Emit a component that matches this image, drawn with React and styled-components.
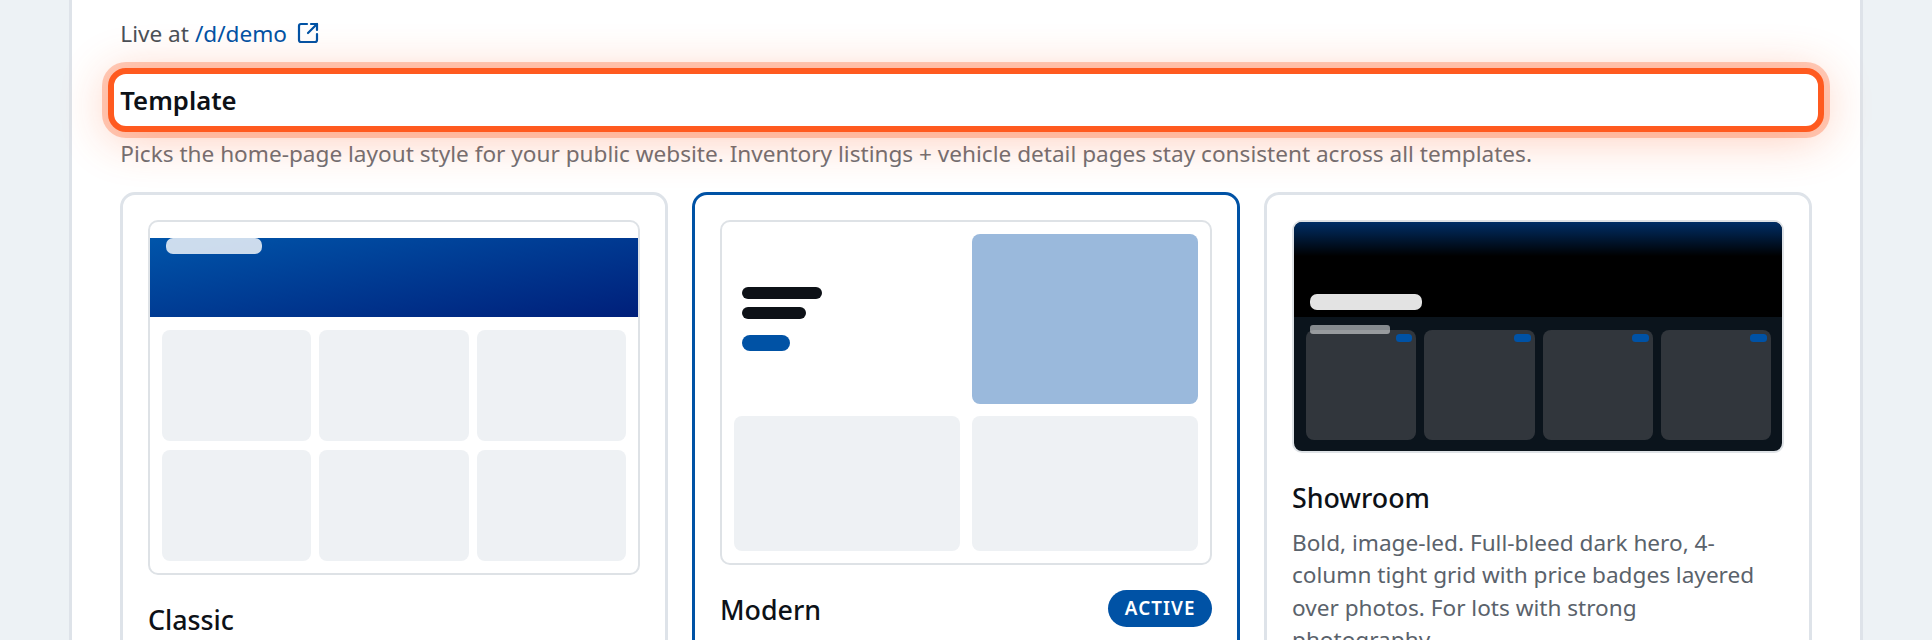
import React from 'react';
import styled, { createGlobalStyle } from 'styled-components';
import { SquareArrowOutUpRight } from 'lucide-react';

const Global = createGlobalStyle`
  html, body { margin: 0; padding: 0; height: 640px; overflow: hidden; background: #edf2f5; }
  #root { height: 640px; overflow: hidden; }
  * { box-sizing: border-box; }
`;

const Page = styled.div`
  padding: 0 69px;
  font-family: "Noto Sans", "Open Sans", sans-serif;
  color: #0d1117;
`;

const Panel = styled.main`
  background: #fff;
  border-left: 3px solid #dee3e9;
  border-right: 3px solid #dee3e9;
  padding: 18px 48.3px 0;
`;

const LiveRow = styled.div`
  display: flex;
  align-items: center;
  height: 30px;
  font-size: 22.6px;
  color: #495057;
  gap: 6px;
`;

const LiveLink = styled.a`
  display: inline-flex;
  align-items: center;
  gap: 9px;
  color: #0052a5;
  text-decoration: none;
`;

const Spotlight = styled.div`
  position: relative;
  z-index: 1;
  height: 64px;
  margin: 20px -12.3px 0;
  padding: 0 6.3px;
  display: flex;
  align-items: center;
  border: 6px solid #ff5a1f;
  border-radius: 18px;
  background: #fff;
  font-size: 25.7px;
  font-weight: 600;
  box-shadow: 0 0 0 6px rgba(255, 90, 31, 0.3), 0 6px 48px rgba(255, 90, 31, 0.32);
`;

const Lede = styled.p`
  margin: 6px 0 22px;
  font-size: 22.6px;
  line-height: 32px;
  color: #6c6f75;
  white-space: nowrap;
`;

const CardGrid = styled.div`
  display: grid;
  grid-template-columns: repeat(3, 1fr);
  gap: 24.6px;
  align-items: stretch;
`;

const Card = styled.article`
  border: 3.5px solid ${(p) => (p.$active ? '#0052a5' : '#dee3e9')};
  border-radius: 15px;
  padding: 24.7px;
  background: #fff;
`;

const Preview = styled.div`
  border: 2px solid #dee2e6;
  border-radius: 10px;
  overflow: hidden;
  background: ${(p) => p.$bg || '#fff'};
  height: ${(p) => p.$h}px;
`;

const ClassicHero = styled.div`
  margin-top: 16px;
  height: 79.7px;
  padding-left: 15.8px;
  background: linear-gradient(170deg, #0055aa 0%, #001f7a 100%);
`;

const ClassicPill = styled.div`
  width: 96px;
  height: 16px;
  border-radius: 7px;
  background: rgba(255, 255, 255, 0.8);
`;

const ClassicTiles = styled.div`
  display: grid;
  grid-template-columns: repeat(3, 1fr);
  grid-auto-rows: 111.7px;
  gap: 8.3px;
  padding: 12.3px 12px;
`;

const Tile = styled.div`
  border-radius: 8px;
  background: #eef1f4;
`;

const ModernLayout = styled.div`
  display: grid;
  grid-template-columns: 1fr 1fr;
  grid-template-rows: 170px 135.7px;
  gap: 12px;
  padding: 12px 12px;
  height: 100%;
`;

const ModernCopy = styled.div`
  display: flex;
  flex-direction: column;
  justify-content: center;
  align-items: flex-start;
  padding-left: 8.4px;
`;

const InkBar = styled.div`
  width: ${(p) => p.$w}px;
  height: 12px;
  border-radius: 6px;
  background: #0d1117;
  margin-bottom: 8px;
`;

const CtaBar = styled.div`
  width: 48px;
  height: 16px;
  margin-top: 8px;
  border-radius: 8px;
  background: #0052a5;
`;

const ModernImage = styled.div`
  border-radius: 8px;
  background: #9ab9dc;
`;

const ShowHero = styled.div`
  height: 95.7px;
  display: flex;
  align-items: flex-end;
  padding: 0 0 7.7px 16px;
  background: linear-gradient(180deg, #002e66 0%, #000 36%);
`;

const ShowPill = styled.div`
  width: 112px;
  height: 16px;
  border-radius: 7px;
  background: #e3e3e3;
`;

const ShowBody = styled.div`
  position: relative;
  display: grid;
  grid-template-columns: repeat(4, 1fr);
  gap: 8px;
  padding: 12.3px 11px 0 12px;
`;

const ShowCaption = styled.div`
  position: absolute;
  left: 16px;
  top: 8px;
  width: 80px;
  height: 8.4px;
  border-radius: 3px;
  background: rgba(255, 255, 255, 0.5);
  z-index: 1;
`;

const ShowTile = styled.div`
  position: relative;
  height: 110px;
  border-radius: 8px;
  background: #31363c;
`;

const PriceBadge = styled.span`
  position: absolute;
  top: 4px;
  right: 4px;
  width: 16.6px;
  height: 8px;
  border-radius: 3.5px;
  background: #0052a5;
`;

const TitleRow = styled.div`
  display: flex;
  justify-content: space-between;
  align-items: flex-start;
  margin-top: 24.6px;
`;

const CardTitle = styled.h3`
  margin: 0;
  font-size: 26.8px;
  line-height: 40px;
  font-weight: 500;
  color: #0d1117;
`;

const ActiveBadge = styled.span`
  display: inline-flex;
  align-items: center;
  height: 37px;
  padding: 0 16.4px;
  border-radius: 19px;
  background: #0052a5;
  color: #fff;
  font-size: 18.8px;
  font-weight: 600;
  letter-spacing: 1.1px;
`;

const CardText = styled.p`
  margin: 9px 0 0;
  font-size: 22.6px;
  line-height: 32.4px;
  color: #5a626b;
`;

export default function App() {
  return (
    <Page>
      <Global />
      <Panel>
        <LiveRow>
          Live at
          <LiveLink href="#">
            /d/demo
            <SquareArrowOutUpRight size={24} strokeWidth={2.2} />
          </LiveLink>
        </LiveRow>
        <Spotlight>Template</Spotlight>
        <Lede>
          Picks the home-page layout style for your public website. Inventory listings + vehicle detail pages stay consistent across all templates.
        </Lede>
        <CardGrid>
          <Card>
            <Preview $h={355.7}>
              <ClassicHero>
                <ClassicPill />
              </ClassicHero>
              <ClassicTiles>
                {[0, 1, 2, 3, 4, 5].map((i) => (
                  <Tile key={i} />
                ))}
              </ClassicTiles>
            </Preview>
            <TitleRow>
              <CardTitle>Classic</CardTitle>
            </TitleRow>
          </Card>
          <Card $active>
            <Preview $h={345.7}>
              <ModernLayout>
                <ModernCopy>
                  <InkBar $w={80} />
                  <InkBar $w={64} />
                  <CtaBar />
                </ModernCopy>
                <ModernImage />
                <Tile />
                <Tile />
              </ModernLayout>
            </Preview>
            <TitleRow>
              <CardTitle>Modern</CardTitle>
              <ActiveBadge>ACTIVE</ActiveBadge>
            </TitleRow>
          </Card>
          <Card>
            <Preview $h={233.7} $bg="#0b141c">
              <ShowHero>
                <ShowPill />
              </ShowHero>
              <ShowBody>
                <ShowCaption />
                {[0, 1, 2, 3].map((i) => (
                  <ShowTile key={i}>
                    <PriceBadge />
                  </ShowTile>
                ))}
              </ShowBody>
            </Preview>
            <TitleRow>
              <CardTitle>Showroom</CardTitle>
            </TitleRow>
            <CardText>
              Bold, image-led. Full-bleed dark hero, 4-column tight grid with price badges layered over photos. For lots with strong photography.
            </CardText>
          </Card>
        </CardGrid>
      </Panel>
    </Page>
  );
}
